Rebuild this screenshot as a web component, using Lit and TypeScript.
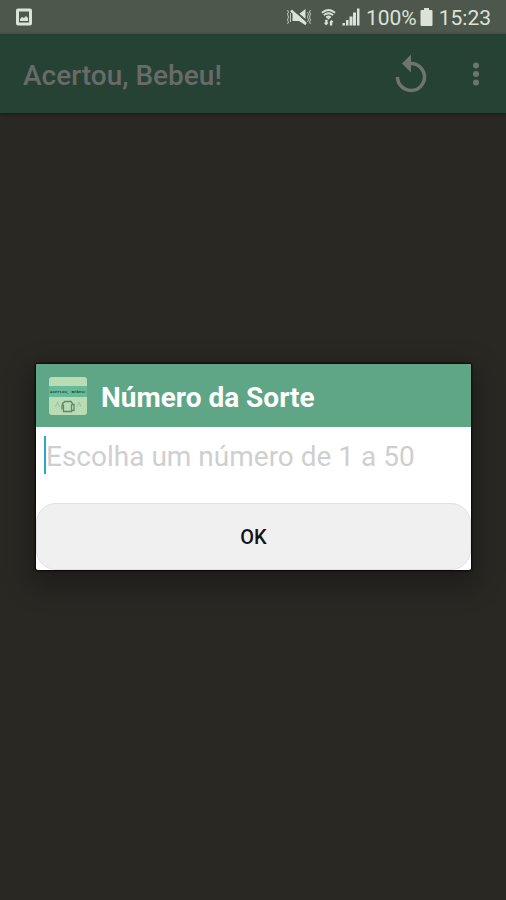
import { LitElement, html, css } from "lit";
import { customElement, state } from "lit/decorators.js";

@customElement("status-bar")
class StatusBar extends LitElement {
  static styles = css`
    :host {
      display: flex;
      align-items: center;
      justify-content: space-between;
      height: 34px;
      padding: 0 15px;
      background: #4d574b;
      color: #dbe3d9;
      font-size: 21px;
      line-height: 34px;
    }
    svg {
      display: block;
      fill: currentColor;
    }
    .right {
      display: flex;
      align-items: center;
    }
    .text {
      margin-top: 2px;
    }
    .wifi {
      margin: 0 6px 0 9px;
    }
    .percent {
      margin-left: 6px;
    }
    .battery {
      margin: 0 6px 0 3px;
    }
  `;

  render() {
    return html`
      <svg width="18" height="18" viewBox="0 0 18 18" aria-hidden="true">
        <path fill-rule="evenodd" d="M3 0.500h12a2 2 0 0 1 2 2v13a2 2 0 0 1-2 2H3a2 2 0 0 1-2-2v-13a2 2 0 0 1 2-2zM4 3.500v11h10v-11z" />
        <path d="M5 13V11l2-2 2 1 2-2 2 2v3z" />
      </svg>
      <div class="right">
        <svg width="26" height="18" viewBox="0 0 26 18" aria-label="Vibrar">
          <path d="M6.500 6H13l6.500-5v16L13 13H6.500z" />
          <path d="M6 0.500L21 13.500" fill="none" stroke="#4d574b" stroke-width="2" />
          <path d="M5 2.500L20 16" fill="none" stroke="currentColor" stroke-width="2.500" />
          <path d="M1.500 2l1 2-1 2 1 3-1 3 1 2-1 2M4.500 5v9M21.500 4l1 2-1 3 1 3-1 2M24.500 2l-1 2 1 2-1 3 1 3-1 2 1 2" fill="none" stroke="currentColor" stroke-width="1" stroke-opacity="0.800" />
        </svg>
        <svg class="wifi" width="15" height="18" viewBox="0 0 16 18" aria-label="Wi-Fi">
          <path d="M1 4.500q7-6 14 0M3 7q5-4 10 0M5.500 9.500q2.500-2 5 0" fill="none" stroke="currentColor" stroke-width="2" />
          <path d="M6 9.500h4L8 12zM4.500 12h2.500v3h1L5.500 18 3 15h1.500zM9 14.500L11 12l2.500 2.500H12V18H9.500v-3.500z" />
        </svg>
        <svg width="18" height="18" viewBox="0 0 18 18" aria-label="Sinal">
          <path d="M0.500 15h2.500v2.500H0.500zM4 12h2.500v5.500H4zM7.500 8.500h3v9h-3zM11 4.500h3v13h-3zM15 0.500h2.500v17H15z" />
        </svg>
        <span class="text percent">100%</span>
        <svg class="battery" width="13" height="18" viewBox="0 0 13 18" aria-label="Bateria">
          <path d="M4 0h5v2h2.500q1 0 1 1v14q0 1-1 1h-10q-1 0-1-1V3q0-1 1-1H4z" />
        </svg>
        <span class="text">15:23</span>
      </div>
    `;
  }
}

@customElement("app-bar")
class AppBar extends LitElement {
  static styles = css`
    :host {
      display: flex;
      align-items: center;
      height: 79px;
      padding: 0 18px 0 23px;
      box-sizing: border-box;
      background: #264234;
      color: #6d7570;
      box-shadow: 0 1px 3px #1a1715;
    }
    h1 {
      flex: 1;
      margin: 4px 0 0;
      font-size: 28px;
      line-height: 32px;
      font-weight: 500;
      color: #686b68;
    }
    button {
      display: grid;
      place-items: center;
      height: 48px;
      padding: 0;
      border: 0;
      background: none;
      color: inherit;
    }
    .reload {
      width: 48px;
      margin-right: 29px;
    }
    .more {
      width: 24px;
    }
  `;

  render() {
    return html`
      <h1>Acertou, Bebeu!</h1>
      <button class="reload" aria-label="Recomeçar">
        <svg width="32" height="40" viewBox="0 0 32 40">
          <path d="M15.500 9.500A13.500 13.500 0 1 1 2.500 23" fill="none" stroke="currentColor" stroke-width="3.500" />
          <path d="M7 9.500L16 0.500v18z" fill="currentColor" />
        </svg>
      </button>
      <button class="more" aria-label="Mais opções">
        <svg width="8" height="24" viewBox="0 0 8 24" fill="currentColor">
          <circle cx="4" cy="3.500" r="3" />
          <circle cx="4" cy="12" r="3" />
          <circle cx="4" cy="20.500" r="3" />
        </svg>
      </button>
    `;
  }
}

@customElement("number-dialog")
class NumberDialog extends LitElement {
  @state() private value = "";

  static styles = css`
    :host {
      display: block;
      background: #fff;
      border-radius: 2px;
      overflow: hidden;
      box-shadow: 0 0 2px 1px #080807, 0 10px 28px 6px rgba(0, 0, 0, 0.3);
    }
    header {
      display: flex;
      align-items: center;
      gap: 13px;
      height: 63px;
      padding: 0 12px;
      background: #5ea685;
      color: #fff;
    }
    h2 {
      margin: 4px 0 0;
      font-size: 28px;
      line-height: 32px;
      font-weight: 700;
    }
    .logo {
      display: block;
    }
    .logo text {
      font: 700 4px "Liberation Mono", monospace;
      fill: #17463f;
    }
    .field {
      display: flex;
      align-items: center;
      height: 38px;
      padding: 9px 8px 29px;
    }
    .caret {
      width: 2px;
      height: 38px;
      background: #27a9c9;
    }
    input {
      flex: 1;
      min-width: 0;
      height: 38px;
      padding: 2px 0 0;
      box-sizing: border-box;
      border: 0;
      outline: 0;
      background: none;
      color: #222;
      caret-color: transparent;
      font: 400 28px/32px Roboto, sans-serif;
    }
    input::placeholder {
      color: #cfcfcf;
      opacity: 1;
    }
    .ok {
      display: block;
      width: 100%;
      height: 67px;
      padding: 0;
      border: 1px solid #dfe0df;
      border-radius: 20px;
      background: #f0f0f0;
      color: #151515;
      font: 500 20px/24px Roboto, sans-serif;
    }
  `;

  render() {
    return html`
      <header>
        <svg class="logo" width="40" height="40" viewBox="0 0 40 40" aria-hidden="true">
          <rect x="1" y="1" width="38" height="38" rx="3" fill="#b9dcb5" />
          <rect x="1" y="10" width="38" height="11" fill="#67b997" />
          <text x="20" y="17" text-anchor="middle">Acertou, Bebeu!</text>
          <path d="M17 25.500h6l1.500 2-1 2v6h-8v-6l-1-2zM15.500 29.500h-1.500v4M24 28.500h2v6h-2" fill="none" stroke="#65856a" stroke-width="1.300" />
          <path d="M7.500 31l2-5 2 5M29 31l2-5 2 5" fill="none" stroke="#92c79c" />
        </svg>
        <h2 id="title">Número da Sorte</h2>
      </header>
      <div class="field">
        <span class="caret"></span>
        <input
          aria-labelledby="title"
          inputmode="numeric"
          placeholder="Escolha um número de 1 a 50"
          .value=${this.value}
          @input=${(e: InputEvent) => (this.value = (e.target as HTMLInputElement).value)}
        />
      </div>
      <button class="ok">OK</button>
    `;
  }
}

@customElement("app-root")
class AppRoot extends LitElement {
  static styles = css`
    :host {
      display: flex;
      flex-direction: column;
      min-height: 100vh;
      background: #2a2823;
      font-family: Roboto, sans-serif;
    }
    .screen {
      flex: 1;
      display: grid;
      position: relative;
      grid-template-rows: auto 1fr;
    }
    .overlay {
      position: absolute;
      inset: 0;
      display: grid;
      align-items: center;
      padding: 0 35px 0 36px;
    }
  `;

  render() {
    return html`
      <status-bar></status-bar>
      <main class="screen">
        <app-bar></app-bar>
        <div class="overlay">
          <number-dialog role="dialog" aria-label="Número da Sorte"></number-dialog>
        </div>
      </main>
    `;
  }
}
